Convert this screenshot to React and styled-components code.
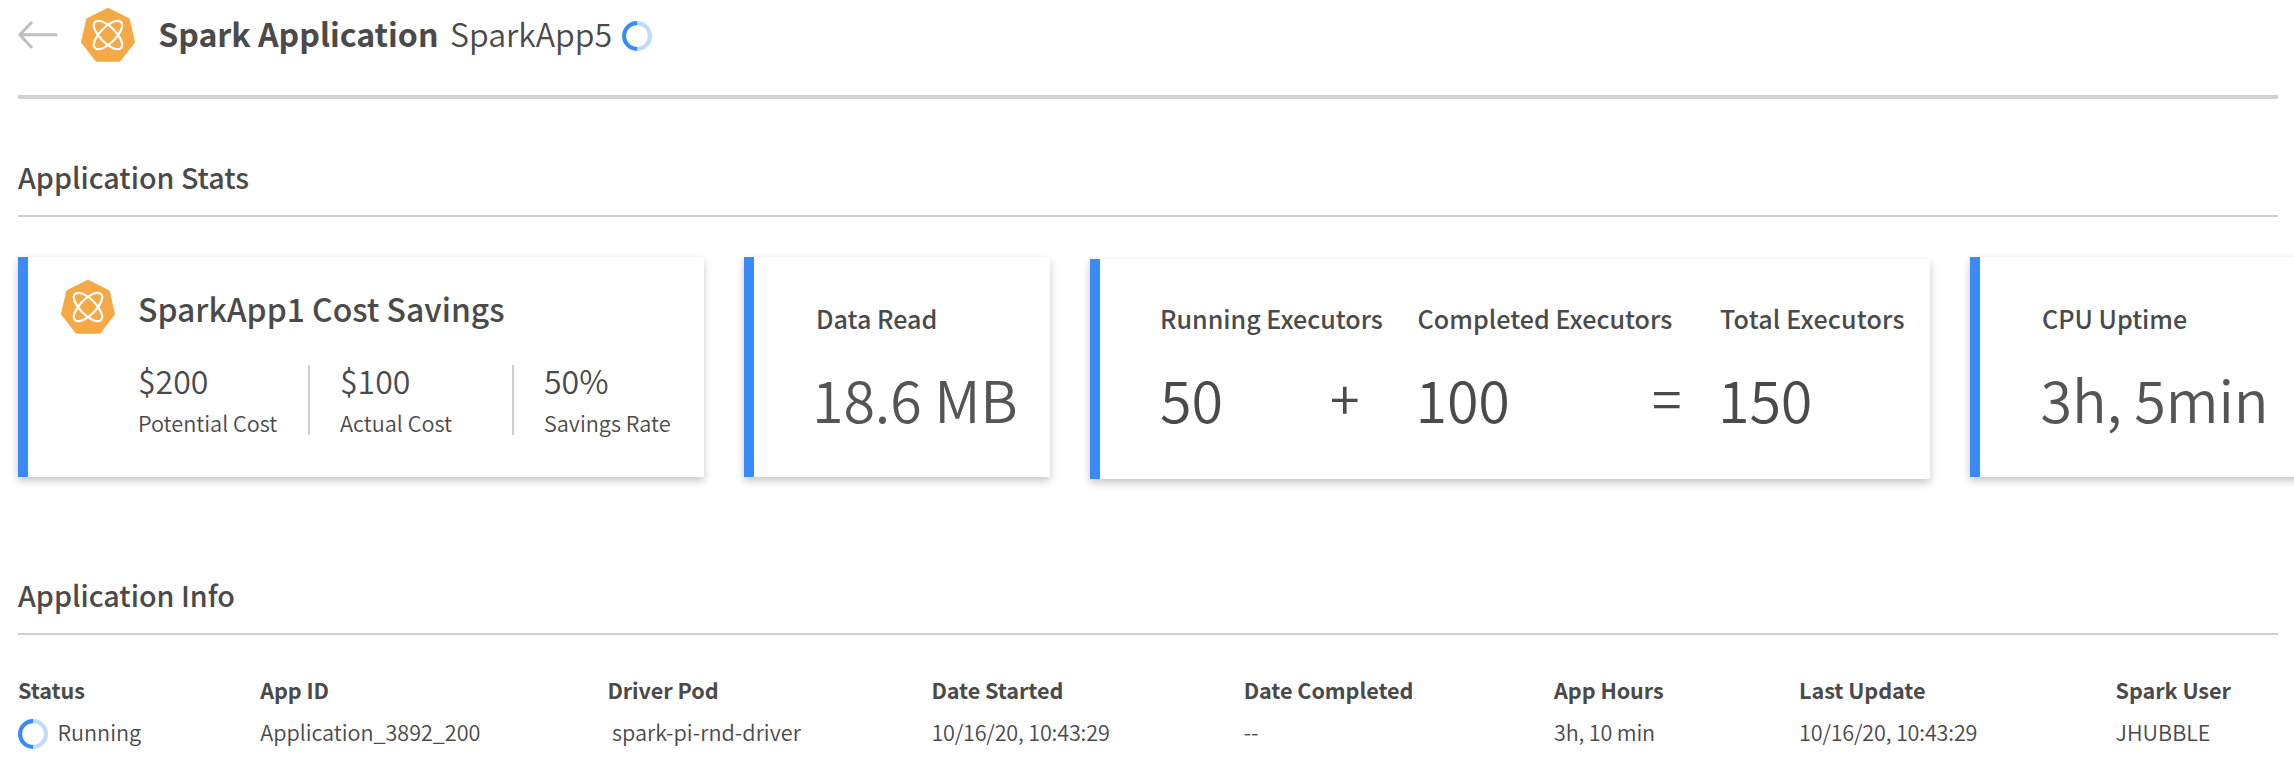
import React from 'react';
import styled, { createGlobalStyle } from 'styled-components';

const GlobalStyle = createGlobalStyle`
  * { box-sizing: border-box; }
  body {
    margin: 0;
    background: #fff;
    color: #4a4a4a;
    font-family: "Noto Sans CJK SC", "Noto Sans", sans-serif;
    overflow: hidden;
  }
  h1, h2, h3, p, dl, dt, dd { margin: 0; font-weight: inherit; font-size: inherit; }
  svg { display: block; flex: none; }
`;

const Page = styled.main`
  width: 100%;
  height: 780px;
  padding: 8px 16px 0 18px;
  overflow: hidden;
`;

const Header = styled.header`
  display: flex;
  align-items: flex-start;
  height: 91px;
  border-bottom: 4px solid #d0d1d3;
`;

const BackButton = styled.button`
  display: flex;
  width: 63px;
  padding: 12px 0 0;
  border: 0;
  background: none;
`;

const Title = styled.h1`
  display: flex;
  gap: 11.5px;
  width: 463.5px;
  margin-left: 23.2px;
  font-size: 32.1px;
  line-height: 50px;
  white-space: nowrap;
`;

const TitleKind = styled.span`
  font-weight: 700;
`;

const TitleName = styled.span`
  font-weight: 350;
`;

const HeaderStatus = styled.span`
  padding-top: 13px;
`;

const Section = styled.section`
  margin-top: ${p => p.$gap}px;
`;

const SectionTitle = styled.h2`
  height: 61px;
  border-bottom: 2px solid #cfcfcf;
  font-size: 28.7px;
  font-weight: 500;
  line-height: 41px;
`;

const CardRow = styled.div`
  display: flex;
  align-items: flex-start;
  gap: 40px;
  padding-top: 40px;
`;

const Card = styled.article`
  display: flex;
  flex: none;
  width: ${p => p.$width}px;
  height: 220px;
  margin-top: ${p => p.$drop || 0}px;
  padding: ${p => 43 - (p.$drop || 0)}px 0 0 ${p => p.$inset}px;
  border-left: 10px solid #3a8bf9;
  background: #fff;
  box-shadow: 0 4px 8px rgba(0, 0, 0, 0.22);
  white-space: nowrap;
`;

const SavingsCard = styled(Card)`
  gap: 23px;
  padding: 23px 0 0 33px;
`;

const SavingsBody = styled.div`
  padding-top: 5px;
`;

const SavingsTitle = styled.h3`
  font-size: 31.9px;
  font-weight: 500;
  line-height: 46px;
`;

const Metrics = styled.div`
  display: flex;
  margin-top: 26px;
`;

const Metric = styled.div`
  width: ${p => p.$width}px;
`;

const MetricValue = styled.p`
  font-size: 32.1px;
  font-weight: 350;
  line-height: 46px;
`;

const MetricLabel = styled.p`
  margin-top: 4px;
  font-size: 21.65px;
  font-weight: 350;
  line-height: 31px;
`;

const Divider = styled.span`
  width: 2px;
  height: 70px;
  margin: 8px 30px 0 0;
  background: #cfcfcf;
`;

const Stat = styled.div`
  width: ${p => (p.$width ? `${p.$width}px` : 'auto')};
`;

const StatLabel = styled.p`
  font-size: 25.1px;
  font-weight: 500;
  letter-spacing: ${p => p.$tracking || 0}px;
  line-height: 36px;
`;

const StatFigure = styled.div`
  display: flex;
  justify-content: space-between;
  margin: 20px 0 0 ${p => p.$shift}px;
  padding-right: ${p => p.$trail || 0}px;
  line-height: 84px;
`;

const StatValue = styled.span`
  color: ${p => (p.$soft ? '#555' : '#4a4a4a')};
  font-size: 57.5px;
  font-weight: 350;
  letter-spacing: -0.15px;
`;

const Operator = styled.span`
  font-size: 53.8px;
  font-weight: 350;
  line-height: 81px;
`;

const InfoList = styled.dl`
  display: grid;
  grid-template-columns: 242.2px 347.2px 324px 312.3px 310.4px 245px 316.5px auto;
  padding-top: 39px;
  font-size: 21.6px;
  line-height: 31px;
  white-space: nowrap;
`;

const InfoLabel = styled.dt`
  font-weight: 700;
  letter-spacing: -0.06px;
`;

const InfoValue = styled.dd`
  display: flex;
  gap: 9.5px;
  padding: 11px 0 0 ${p => p.$indent || 0}px;
  font-weight: 350;
  letter-spacing: ${p => p.$tracking || 0}px;
`;

const InfoStatus = styled.span`
  padding-top: 3px;
`;

function BackArrow() {
  return (
    <svg width="42" height="32" viewBox="0 0 42 32" fill="none" stroke="#bfbfbf" strokeWidth="3" strokeLinecap="round" strokeLinejoin="round">
      <path d="M38.2 14.8H1.8M13.2 2.8L1.8 14.8L13.2 27" />
    </svg>
  );
}

function SparkIcon() {
  return (
    <svg width="54" height="54" viewBox="0 0 54 54" fill="none">
      <path
        d="M27 2.6L46.5 12.2L51.4 33.8L37.8 51.3H16.2L2.6 33.8L7.5 12.2Z"
        fill="#f4a946"
        stroke="#f4a946"
        strokeWidth="5"
        strokeLinejoin="round"
      />
      <g stroke="#fff" strokeWidth="2.2">
        <ellipse cx="27" cy="27" rx="18.4" ry="7.9" transform="rotate(45 27 27)" />
        <ellipse cx="27" cy="27" rx="18.4" ry="7.9" transform="rotate(-45 27 27)" />
      </g>
    </svg>
  );
}

function Spinner() {
  return (
    <svg width="30" height="30" viewBox="0 0 30 30" fill="none" strokeWidth="4.2">
      <path d="M15 2.1A12.9 12.9 0 0 1 15 27.9" stroke="#bddaff" />
      <path d="M15 2.1A12.9 12.9 0 0 0 15 27.9" stroke="#3a8bf9" />
    </svg>
  );
}

const info = [
  { label: 'Status', value: 'Running', running: true },
  { label: 'App ID', value: 'Application_3892_200', tracking: -0.03 },
  { label: 'Driver Pod', value: 'spark-pi-rnd-driver', indent: 4.5, tracking: 0.05 },
  { label: 'Date Started', value: '10/16/20, 10:43:29', tracking: -0.18 },
  { label: 'Date Completed', value: '--' },
  { label: 'App Hours', value: '3h, 10 min', tracking: -0.18 },
  { label: 'Last Update', value: '10/16/20, 10:43:29', tracking: -0.18 },
  { label: 'Spark User', value: 'JHUBBLE' },
];

export default function App() {
  return (
    <>
      <GlobalStyle />
      <Page>
        <Header>
          <BackButton aria-label="Back"><BackArrow /></BackButton>
          <SparkIcon />
          <Title>
            <TitleKind>Spark Application</TitleKind>
            <TitleName>SparkApp5</TitleName>
          </Title>
          <HeaderStatus><Spinner /></HeaderStatus>
        </Header>

        <Section $gap={57}>
          <SectionTitle>Application Stats</SectionTitle>
          <CardRow>
            <SavingsCard $width={686}>
              <SparkIcon />
              <SavingsBody>
                <SavingsTitle>SparkApp1 Cost Savings</SavingsTitle>
                <Metrics>
                  <Metric $width={170}>
                    <MetricValue>$200</MetricValue>
                    <MetricLabel>Potential Cost</MetricLabel>
                  </Metric>
                  <Divider />
                  <Metric $width={172}>
                    <MetricValue>$100</MetricValue>
                    <MetricLabel>Actual Cost</MetricLabel>
                  </Metric>
                  <Divider />
                  <Metric>
                    <MetricValue>50%</MetricValue>
                    <MetricLabel>Savings Rate</MetricLabel>
                  </Metric>
                </Metrics>
              </SavingsBody>
            </SavingsCard>

            <Card $width={306} $inset={62}>
              <Stat>
                <StatLabel>Data Read</StatLabel>
                <StatFigure $shift={-4}><StatValue $soft>18.6 MB</StatValue></StatFigure>
              </Stat>
            </Card>

            <Card $width={840} $inset={60} $drop={2}>
              <Stat $width={257.5}>
                <StatLabel>Running Executors</StatLabel>
                <StatFigure $shift={0} $trail={58}>
                  <StatValue>50</StatValue>
                  <Operator>+</Operator>
                </StatFigure>
              </Stat>
              <Stat $width={302.5}>
                <StatLabel $tracking={0.03}>Completed Executors</StatLabel>
                <StatFigure $shift={-2} $trail={38.5}>
                  <StatValue>100</StatValue>
                  <Operator>=</Operator>
                </StatFigure>
              </Stat>
              <Stat>
                <StatLabel $tracking={0.2}>Total Executors</StatLabel>
                <StatFigure $shift={-2}><StatValue>150</StatValue></StatFigure>
              </Stat>
            </Card>

            <Card $width={400} $inset={62}>
              <Stat>
                <StatLabel>CPU Uptime</StatLabel>
                <StatFigure $shift={-1.5}><StatValue $soft>3h, 5min</StatValue></StatFigure>
              </Stat>
            </Card>
          </CardRow>
        </Section>

        <Section $gap={95}>
          <SectionTitle>Application Info</SectionTitle>
          <InfoList>
            {info.map(({ label, value, running, indent, tracking }) => (
              <div key={label}>
                <InfoLabel>{label}</InfoLabel>
                <InfoValue $indent={indent} $tracking={tracking}>
                  {running && <InfoStatus><Spinner /></InfoStatus>}
                  {value}
                </InfoValue>
              </div>
            ))}
          </InfoList>
        </Section>
      </Page>
    </>
  );
}
